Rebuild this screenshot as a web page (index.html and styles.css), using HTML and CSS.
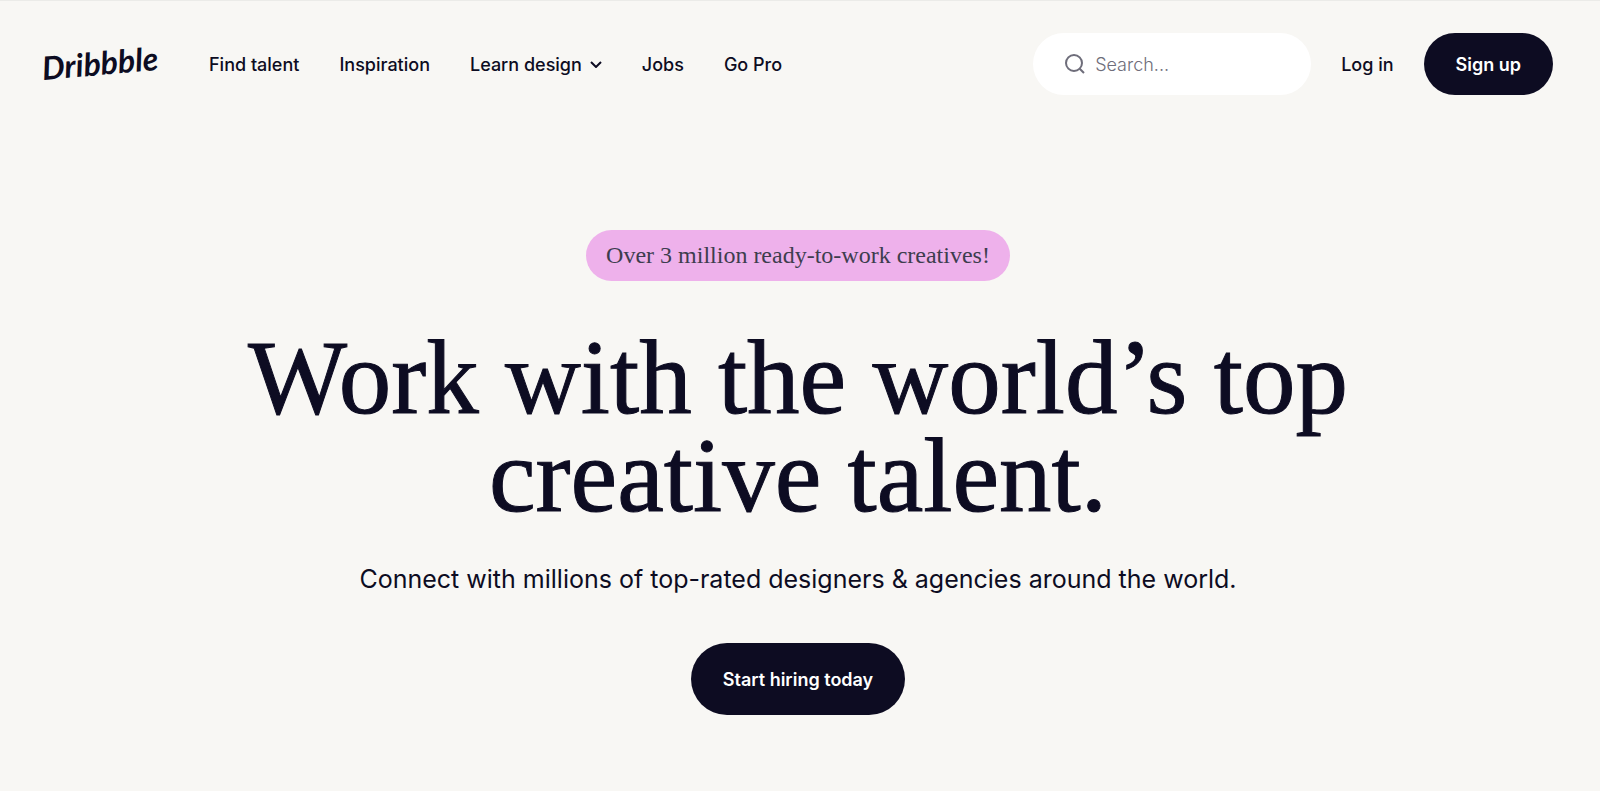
FILE: index.html
```html
<!DOCTYPE html>
<html lang="en">
<head>
    <meta charset="UTF-8">
    <meta name="viewport" content="width=device-width, initial-scale=1.0">
    <title>Dribbble</title>
    <link rel="stylesheet" href="styles.css">
</head>
<body>

    <header class="header">
        <a class="logo" href="#" aria-label="Dribbble home">
            <svg width="136" height="62" viewBox="0 0 136 62">
                <text x="6" y="47" transform="rotate(-5 6 47)">Dribbble</text>
            </svg>
        </a>

        <nav class="nav">
            <a href="#">Find talent</a>
            <a href="#">Inspiration</a>
            <a href="#">Learn design
                <svg class="chevron" width="12" height="8" viewBox="0 0 12 8">
                    <path d="M1 2l5 5 5-5"/>
                </svg>
            </a>
            <a href="#">Jobs</a>
            <a href="#">Go Pro</a>
        </nav>

        <div class="actions">
            <label class="search">
                <svg width="20" height="20" viewBox="0 0 20 20">
                    <circle cx="9" cy="9" r="8"/>
                    <path d="M14.700 14.700 19 19"/>
                </svg>
                <input type="search" placeholder="Search..." aria-label="Search">
            </label>
            <a class="login" href="#">Log in</a>
            <button class="btn" type="button">Sign up</button>
        </div>
    </header>

    <main class="hero">
        <p class="badge">Over 3 million ready-to-work creatives!</p>
        <h1>Work with the world’s top creative talent.</h1>
        <p class="subtitle">Connect with millions of top-rated designers &amp; agencies around the world.</p>
        <button class="btn btn-large" type="button">Start hiring today</button>
    </main>

</body>
</html>
```
FILE: styles.css
```css
* {
    box-sizing: border-box;
}

body {
    margin: 0;
    padding-right: 4px;
    border-top: 1px solid #ebebe8;
    background: #f8f7f4;
    color: #0d0c22;
    font-family: Inter, "Liberation Sans", sans-serif;
    font-size: 18px;
}

a {
    color: inherit;
    text-decoration: none;
}

.header {
    display: flex;
    align-items: center;
    padding: 32px 43px 32px 37px;
    font-weight: 500;
}

.logo {
    display: flex;
    margin-right: 36px;
}

.logo text {
    fill: #0d0c22;
    font-family: Lato, sans-serif;
    font-size: 32px;
    font-style: italic;
    font-weight: 700;
}

.nav {
    display: flex;
    gap: 40px;
    white-space: nowrap;
}

.nav a {
    display: flex;
    align-items: center;
    gap: 8px;
}

.chevron {
    fill: none;
    stroke: #0d0c22;
    stroke-width: 2;
}

.actions {
    display: flex;
    align-items: center;
    gap: 30px;
    margin-left: auto;
    white-space: nowrap;
}

.search {
    display: flex;
    align-items: center;
    gap: 10px;
    width: 278px;
    height: 62px;
    padding: 0 32px;
    border-radius: 31px;
    background: #fff;
}

.search svg {
    flex: none;
    fill: none;
    stroke: #6e6d7a;
    stroke-width: 2;
}

.search input {
    width: 100%;
    min-width: 0;
    padding: 0;
    border: none;
    outline: none;
    background: none;
    color: #0d0c22;
    font-family: inherit;
    font-size: 18px;
    font-weight: 300;
}

.search input::placeholder {
    color: #6e6d7a;
}

.btn {
    height: 62px;
    padding: 0 32px;
    border: none;
    border-radius: 36px;
    background: #0d0c22;
    color: #fff;
    font-family: inherit;
    font-size: 18px;
    font-weight: 600;
    cursor: pointer;
}

.hero {
    display: flex;
    flex-direction: column;
    align-items: center;
    padding: 103px 43px 76px;
    text-align: center;
}

.badge {
    margin: 0 0 48px;
    padding: 0 20px;
    border-radius: 26px;
    background: #eeb1eb;
    color: #3d3d4e;
    font-family: "Liberation Serif", serif;
    font-size: 24px;
    line-height: 51px;
}

h1 {
    max-width: 1150px;
    margin: 0 0 36px;
    font-family: "Liberation Serif", serif;
    font-size: 105px;
    font-weight: 400;
    line-height: 98px;
    -webkit-text-stroke: 1px #0d0c22;
}

.subtitle {
    margin: 0 0 46px;
    font-size: 25px;
    line-height: 36px;
}

.btn-large {
    height: 72px;
}
```
